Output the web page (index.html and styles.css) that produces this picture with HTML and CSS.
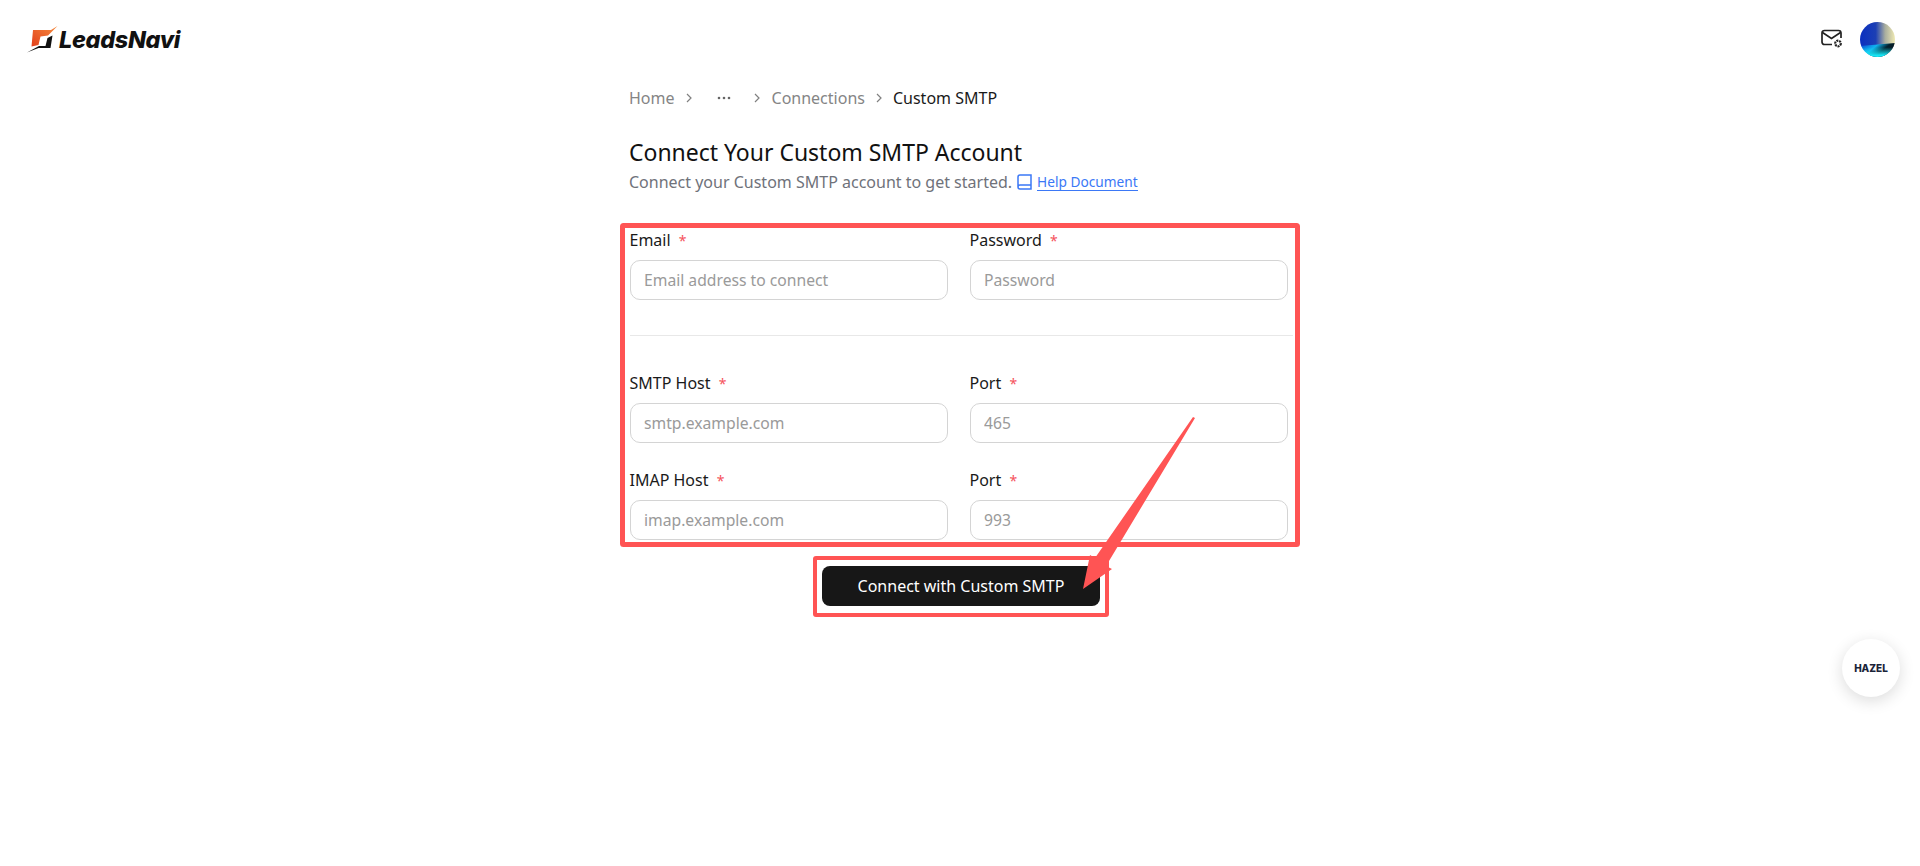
FILE: index.html
```html
<!DOCTYPE html>
<html lang="en">
  <head>
    <meta charset="UTF-8" />
    <meta name="viewport" content="width=device-width, initial-scale=1.0" />
    <title>Connect Custom SMTP</title>
    <link rel="stylesheet" href="styles.css">
  </head>
  <body>
    <header class="topbar">
      <a href="#" class="logo">
        <svg class="logo-mark" width="31" height="27" viewBox="0 0 31 27">
          <defs>
            <linearGradient id="logo-fill" x1="0" y1="1" x2="1" y2="0">
              <stop offset="0" stop-color="#e2401c" />
              <stop offset="1" stop-color="#f58a3c" />
            </linearGradient>
          </defs>
          <path d="M6 4H24L30.500 0L21 9.500L13.500 10.500L11.500 19L4.500 20.500Z" fill="url(#logo-fill)" />
          <path d="M0 26.500L12 20H18.500L20.500 12L25.500 9.500L23.500 22H11.500Z" fill="#111" />
        </svg>
        <span class="logo-text">LeadsNavi</span>
      </a>
      <div class="topbar-right">
        <svg class="mail-icon" width="22" height="20" viewBox="0 0 22 20" fill="none" stroke="#222" stroke-width="1.700">
          <path d="M11 15.500H3.500C2 15.500 1 14.500 1 13V4C1 2.500 2 1.500 3.500 1.500H17.500C19 1.500 20 2.500 20 4V9" />
          <path d="M1.500 3.500L10.500 9.500L19.500 3.500" />
          <circle cx="17" cy="14.500" r="2.800" stroke-width="2.200" stroke-dasharray="2 0.800" />
        </svg>
        <svg class="avatar" width="35" height="35" viewBox="0 0 35 35">
          <defs>
            <linearGradient id="sky" x1="0" y1="0" x2="1" y2="0">
              <stop offset="0" stop-color="#0a2fc0" />
              <stop offset="0.45" stop-color="#1c3fb4" />
              <stop offset="0.72" stop-color="#a9ae9f" />
              <stop offset="1" stop-color="#efe9b2" />
            </linearGradient>
            <linearGradient id="sea" x1="0" y1="0" x2="1" y2="0.500">
              <stop offset="0" stop-color="#0a3ad0" />
              <stop offset="0.45" stop-color="#0fb4ee" />
              <stop offset="0.72" stop-color="#04222f" />
              <stop offset="1" stop-color="#0a0f18" />
            </linearGradient>
            <linearGradient id="foam" x1="0" y1="0" x2="0" y2="1">
              <stop offset="0.72" stop-color="#17e6f5" stop-opacity="0" />
              <stop offset="0.95" stop-color="#17e6f5" />
            </linearGradient>
            <clipPath id="round"><circle cx="17.500" cy="17.500" r="17.500" /></clipPath>
          </defs>
          <g clip-path="url(#round)">
            <rect width="35" height="24" fill="url(#sky)" />
            <path d="M0 24L35 21V35H0Z" fill="url(#sea)" />
            <rect width="35" height="35" fill="url(#foam)" />
          </g>
        </svg>
      </div>
    </header>

    <main class="page">
      <nav class="breadcrumb">
        <a href="#" class="crumb">Home</a>
        <svg class="chevron chevron-home" width="6" height="10" viewBox="0 0 6 10" fill="none" stroke="#808080" stroke-width="1.200"><path d="M1 1L5 5L1 9" /></svg>
        <svg class="dots" width="14" height="4" viewBox="0 0 14 4" fill="#666"><circle cx="2" cy="2" r="1.300" /><circle cx="7" cy="2" r="1.300" /><circle cx="12" cy="2" r="1.300" /></svg>
        <svg class="chevron" width="6" height="10" viewBox="0 0 6 10" fill="none" stroke="#808080" stroke-width="1.200"><path d="M1 1L5 5L1 9" /></svg>
        <a href="#" class="crumb">Connections</a>
        <svg class="chevron chevron-last" width="6" height="10" viewBox="0 0 6 10" fill="none" stroke="#808080" stroke-width="1.200"><path d="M1 1L5 5L1 9" /></svg>
        <span class="crumb current">Custom SMTP</span>
      </nav>

      <h1 class="title">Connect Your Custom SMTP Account</h1>
      <p class="subtitle">
        Connect your Custom SMTP account to get started.
        <svg class="book-icon" width="15" height="16" viewBox="0 0 15 16" fill="none" stroke="#3b78f6" stroke-width="1.500">
          <path d="M1 13V3C1 1.800 1.800 1 3 1H14V15H3C1.800 15 1 14.200 1 13C1 11.800 1.800 11 3 11H14" />
        </svg>
        <a href="#" class="help-link">Help Document</a>
      </p>

      <form class="form" onsubmit="return false">
        <div class="field-grid">
          <div class="field">
            <label>Email <span class="req">*</span></label>
            <input type="text" placeholder="Email address to connect" />
          </div>
          <div class="field">
            <label>Password <span class="req">*</span></label>
            <input type="password" placeholder="Password" />
          </div>
        </div>

        <hr class="divider" />

        <div class="field-grid">
          <div class="field">
            <label>SMTP Host <span class="req">*</span></label>
            <input type="text" placeholder="smtp.example.com" />
          </div>
          <div class="field">
            <label>Port <span class="req">*</span></label>
            <input type="text" placeholder="465" />
          </div>
          <div class="field">
            <label>IMAP Host <span class="req">*</span></label>
            <input type="text" placeholder="imap.example.com" />
          </div>
          <div class="field">
            <label>Port <span class="req">*</span></label>
            <input type="text" placeholder="993" />
          </div>
        </div>

        <div class="actions">
          <button class="btn">Connect with Custom SMTP</button>
        </div>
      </form>
    </main>

    <button class="hazel">HAZEL</button>

    <!-- red markup drawn on top of the screenshot -->
    <svg class="markup" width="1920" height="866" viewBox="0 0 1920 866" fill="none">
      <rect x="622.500" y="225.500" width="675" height="319" stroke="#ff5454" stroke-width="5" rx="1" />
      <rect x="815" y="558" width="292" height="57" stroke="#ff5454" stroke-width="4" rx="1" />
      <path d="M1195 418L1106 566L1112 569L1083 589L1090 555L1095 558L1193 417Z" fill="#ff5454" />
    </svg>
  </body>
</html>
```

FILE: styles.css
```css
body {
  font-family: "Noto Sans", "Open Sans", sans-serif;
  margin: 0;
  padding: 0;
  height: 866px;
  overflow: hidden;
  position: relative;
  background-color: #fff;
  color: #1a1a1a;
}
a {
  text-decoration: none;
}

.topbar {
  height: 78px;
  display: flex;
  align-items: center;
  justify-content: space-between;
  padding: 0 25px 0 27px;
  box-sizing: border-box;
}
.logo {
  display: flex;
  align-items: center;
  gap: 1px;
  color: #111;
}
.logo-text {
  font-family: Inter, sans-serif;
  font-size: 23.400px;
  font-weight: 800;
  font-style: italic;
  letter-spacing: -0.3px;
}
.topbar-right {
  display: flex;
  align-items: center;
  gap: 17px;
}

.page {
  width: 658px;
  margin-left: 630px;
}
.breadcrumb {
  display: flex;
  align-items: center;
  height: 40px;
  font-size: 16px;
  margin-left: -1px;
}
.crumb {
  color: #858585;
}
.crumb.current {
  color: #1a1a1a;
}
.chevron {
  margin: 0 12px;
}
.chevron-home {
  margin: 0 25px 0 11px;
}
.chevron-last {
  margin: 0 11px;
}
.dots {
  margin-right: -1px;
  padding-right: 12px;
}

.title {
  font-size: 23px;
  font-weight: 400;
  letter-spacing: -0.02px;
  line-height: 32px;
  margin: 18px 0 0 -1px;
  color: #111;
}
.subtitle {
  display: flex;
  align-items: center;
  font-size: 16px;
  line-height: 24px;
  margin: 2px 0 0 -1px;
  color: #6f727a;
}
.book-icon {
  margin: 0 5px;
}
.help-link {
  font-size: 13.700px;
  line-height: 17px;
  color: #3b78f6;
  border-bottom: 1px solid #3b78f6;
}

.form {
  margin-top: 35px;
}
.field-grid {
  display: grid;
  grid-template-columns: 318px 318px;
  column-gap: 22px;
  row-gap: 26px;
}
.field label {
  display: block;
  font-size: 16px;
  line-height: 22px;
  margin: 0 0 9px -0.500px;
  color: #1a1a1a;
}
.req {
  color: #f5525c;
  font-size: 14px;
  line-height: 1;
  margin-left: 4px;
}
.field input {
  display: block;
  width: 100%;
  height: 40px;
  box-sizing: border-box;
  padding: 0 13px;
  font-family: inherit;
  font-size: 15.700px;
  background: #fff;
  border: 1px solid #d4d4d4;
  border-radius: 10px;
  outline: none;
}
.field input::placeholder {
  color: #9a9a9a;
}
.divider {
  border: 0;
  border-top: 1px solid #e8e8e8;
  margin: 35px 0 36px;
  width: 663px;
}

.actions {
  display: flex;
  justify-content: center;
  margin-top: 26px;
}
.btn {
  width: 278px;
  height: 40px;
  margin-left: 4px;
  font-family: inherit;
  font-size: 16px;
  color: #fff;
  background: #171717;
  border: 0;
  border-radius: 8px;
}

.hazel {
  position: absolute;
  left: 1842px;
  top: 639px;
  width: 58px;
  height: 58px;
  padding: 0;
  border: 0;
  border-radius: 50%;
  background: #fff;
  box-shadow: 0 4px 16px rgba(0, 0, 0, 0.14);
  font-family: Inter, sans-serif;
  font-size: 10px;
  font-weight: 800;
  color: #1a2438;
}
.markup {
  position: absolute;
  left: 0;
  top: 0;
  pointer-events: none;
}
```
